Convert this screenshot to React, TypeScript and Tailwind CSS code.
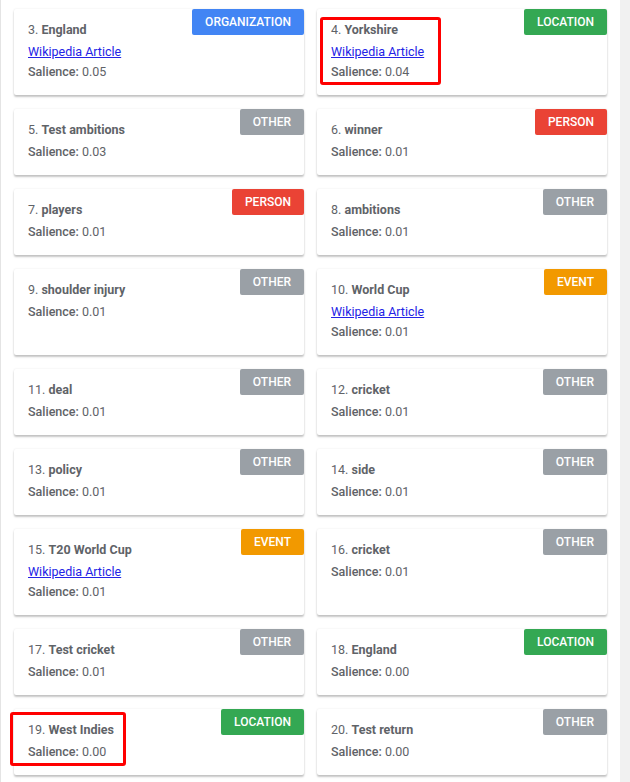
type Entity = {
  n: number;
  name: string;
  type: "ORGANIZATION" | "LOCATION" | "OTHER" | "PERSON" | "EVENT";
  salience: string;
  wiki?: boolean;
  mark?: "a" | "b";
};

const entities: Entity[] = [
  { n: 3, name: "England", type: "ORGANIZATION", salience: "0.05", wiki: true },
  { n: 4, name: "Yorkshire", type: "LOCATION", salience: "0.04", wiki: true, mark: "a" },
  { n: 5, name: "Test ambitions", type: "OTHER", salience: "0.03" },
  { n: 6, name: "winner", type: "PERSON", salience: "0.01" },
  { n: 7, name: "players", type: "PERSON", salience: "0.01" },
  { n: 8, name: "ambitions", type: "OTHER", salience: "0.01" },
  { n: 9, name: "shoulder injury", type: "OTHER", salience: "0.01" },
  { n: 10, name: "World Cup", type: "EVENT", salience: "0.01", wiki: true },
  { n: 11, name: "deal", type: "OTHER", salience: "0.01" },
  { n: 12, name: "cricket", type: "OTHER", salience: "0.01" },
  { n: 13, name: "policy", type: "OTHER", salience: "0.01" },
  { n: 14, name: "side", type: "OTHER", salience: "0.01" },
  { n: 15, name: "T20 World Cup", type: "EVENT", salience: "0.01", wiki: true },
  { n: 16, name: "cricket", type: "OTHER", salience: "0.01" },
  { n: 17, name: "Test cricket", type: "OTHER", salience: "0.01" },
  { n: 18, name: "England", type: "LOCATION", salience: "0.00" },
  { n: 19, name: "West Indies", type: "LOCATION", salience: "0.00", mark: "b" },
  { n: 20, name: "Test return", type: "OTHER", salience: "0.00" },
];

const badgeColor: Record<Entity["type"], string> = {
  ORGANIZATION: "bg-[#4285f4]",
  LOCATION: "bg-[#34a853]",
  OTHER: "bg-[#9aa0a6]",
  PERSON: "bg-[#ea4335]",
  EVENT: "bg-[#f29900]",
};

function Card({ e }: { e: Entity }) {
  return (
    <div className="relative bg-white rounded-[2px] shadow-[0_2px_2px_rgba(0,0,0,0.22),0_0_2px_rgba(0,0,0,0.1)] pl-[14px] pr-3 pt-[13px] pb-[16px]">
      <span
        className={`absolute top-0 right-0 h-[26px] px-[13px] flex items-center rounded-[2px] text-white text-[12px] font-medium ${badgeColor[e.type]}`}
      >
        {e.type}
      </span>
      <div className="flex flex-col text-[12.5px] leading-[15px] text-[#5f6368]">
        <div className="mb-[7px]">
          {e.n}. <span className="font-bold">{e.name}</span>
        </div>
        {e.wiki && (
          <a href="#" className="text-[#2323e6] underline w-fit mb-[5px]">
            Wikipedia Article
          </a>
        )}
        <div>
          <span className="font-medium">Salience:</span> {e.salience}
        </div>
      </div>
      {e.mark === "a" && (
        <div className="absolute left-[3px] top-[8px] w-[121px] h-[68px] border-[3px] border-[#ff0000] rounded-[3px]" />
      )}
      {e.mark === "b" && (
        <div className="absolute left-[-4px] top-[3px] w-[116px] h-[54px] border-[3px] border-[#ff0000] rounded-[3px]" />
      )}
    </div>
  );
}

export default function App() {
  return (
    <div className="flex w-[630px] h-[782px] overflow-hidden bg-white" style={{ fontFamily: "Roboto, 'Liberation Sans', sans-serif" }}>
      <div className="w-[620px] border-l border-[#e4e4e4]">
        <div className="grid grid-cols-[290px_290px] gap-x-[13px] gap-y-[14px] pl-[13px] pt-[9px]">
          {entities.map((e) => (
            <Card key={e.n} e={e} />
          ))}
        </div>
      </div>
      <div className="w-[10px] bg-[#f1f1f1]" />
    </div>
  );
}
